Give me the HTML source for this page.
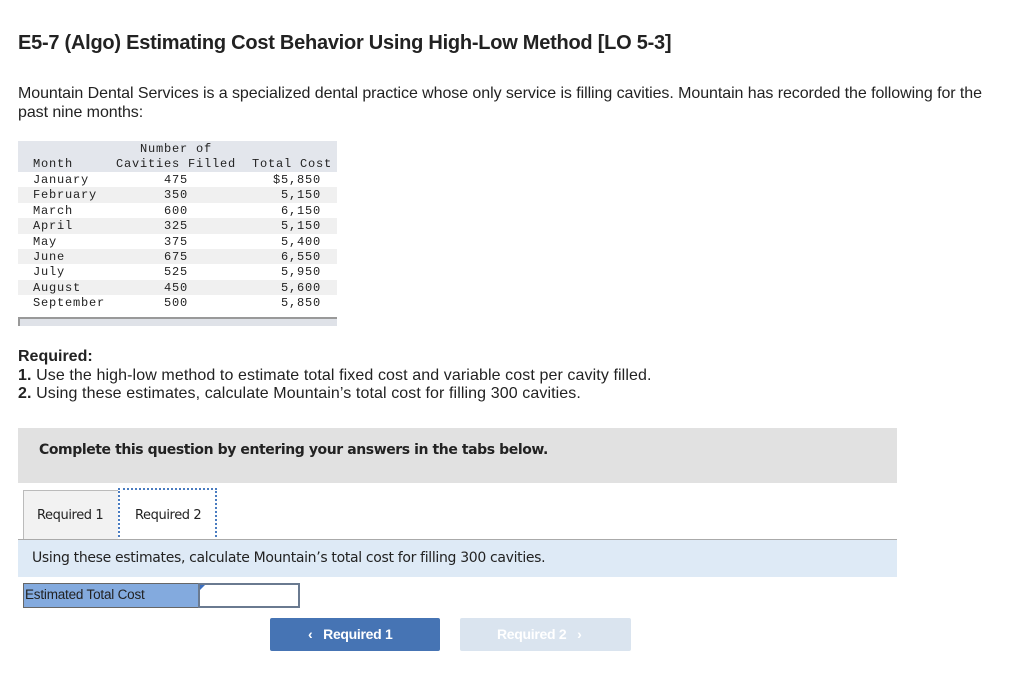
<!DOCTYPE html>
<html><head><style>
*{margin:0;padding:0;box-sizing:border-box}
body{width:1024px;height:684px;background:#fff;font-family:"Liberation Sans",sans-serif;color:#222;position:relative;overflow:hidden}
.a{position:absolute;white-space:nowrap}
.m{font-family:"Liberation Mono",monospace;font-size:12px;letter-spacing:0.8px;color:#222}
.row{position:absolute;left:18px;width:319px;height:15.4px}
.row span{position:absolute;top:1px}
.r{text-align:right;right:16px}
</style></head><body>
<div class="a" style="left:18px;top:32px;font-size:20px;font-weight:bold;letter-spacing:-0.25px">E5-7 (Algo) Estimating Cost Behavior Using High-Low Method [LO 5-3]</div>
<div class="a" style="left:18px;top:84px;font-size:16px;line-height:19px;white-space:normal;width:990px;letter-spacing:-0.07px">Mountain Dental Services is a specialized dental practice whose only service is filling cavities. Mountain has recorded the following for the past nine months:</div>

<div class="a" style="left:18px;top:141px;width:319px;height:31px;background:#e3e6ec"></div>
<div class="a m" style="left:140px;top:142px">Number of</div>
<div class="a m" style="left:33px;top:157px">Month</div>
<div class="a m" style="left:116px;top:157px">Cavities Filled</div>
<div class="a m" style="left:252px;top:157px">Total Cost</div>

<div class="m">
<div class="row" style="top:172px;background:#fff"><span style="left:15px">January</span><span style="left:146px">475</span><span class="r">$5,850</span></div>
<div class="row" style="top:187.4px;background:#f0f0f0"><span style="left:15px">February</span><span style="left:146px">350</span><span class="r">5,150</span></div>
<div class="row" style="top:202.8px;background:#fff"><span style="left:15px">March</span><span style="left:146px">600</span><span class="r">6,150</span></div>
<div class="row" style="top:218.2px;background:#f0f0f0"><span style="left:15px">April</span><span style="left:146px">325</span><span class="r">5,150</span></div>
<div class="row" style="top:233.6px;background:#fff"><span style="left:15px">May</span><span style="left:146px">375</span><span class="r">5,400</span></div>
<div class="row" style="top:249px;background:#f0f0f0"><span style="left:15px">June</span><span style="left:146px">675</span><span class="r">6,550</span></div>
<div class="row" style="top:264.4px;background:#fff"><span style="left:15px">July</span><span style="left:146px">525</span><span class="r">5,950</span></div>
<div class="row" style="top:279.8px;background:#f0f0f0"><span style="left:15px">August</span><span style="left:146px">450</span><span class="r">5,600</span></div>
<div class="row" style="top:295.2px;background:#fff"><span style="left:15px">September</span><span style="left:146px">500</span><span class="r">5,850</span></div>
</div>
<div class="a" style="left:18px;top:317px;width:319px;height:9px;background:#dfe2e8;border-top:2px solid #999;border-left:2px solid #999"></div>

<div class="a" style="left:18px;top:348px;font-size:16px;font-weight:bold">Required:</div>
<div class="a" style="left:18px;top:367px;font-size:16px;letter-spacing:0.1px"><b>1.</b> Use the high-low method to estimate total fixed cost and variable cost per cavity filled.</div>
<div class="a" style="left:18px;top:385px;font-size:16px;letter-spacing:0.1px"><b>2.</b> Using these estimates, calculate Mountain’s total cost for filling 300 cavities.</div>

<div class="a" style="left:18px;top:428px;width:879px;height:55px;background:#e1e1e1"></div>
<div class="a" style="left:39px;top:442px;font-size:14px;font-weight:bold;font-family:'DejaVu Sans',sans-serif;letter-spacing:-0.42px">Complete this question by entering your answers in the tabs below.</div>

<div class="a" style="left:23px;top:490px;width:96px;height:50px;background:#f2f2f2;border:1px solid #bbb;border-bottom:none"></div>
<div class="a" style="left:37px;top:508px;font-size:13px;font-family:'DejaVu Sans',sans-serif;letter-spacing:-0.4px">Required 1</div>
<div class="a" style="left:118px;top:488px;width:99px;height:53px;background:#fff;border:2px dotted #4a7cc0"></div>
<div class="a" style="left:135px;top:508px;font-size:13px;font-family:'DejaVu Sans',sans-serif;letter-spacing:-0.4px">Required 2</div>
<div class="a" style="left:18px;top:539px;width:879px;height:38px;background:#deeaf6;border-top:1px solid #aaa"></div>
<div class="a" style="left:32px;top:550px;font-size:14px;font-family:'DejaVu Sans',sans-serif;letter-spacing:-0.33px">Using these estimates, calculate Mountain’s total cost for filling 300 cavities.</div>

<div class="a" style="left:23px;top:583px;width:176px;height:25px;background:#83aade;border:1px solid #666"></div>
<div class="a" style="left:25px;top:587px;font-size:13.5px;letter-spacing:-0.2px">Estimated Total Cost</div>
<div class="a" style="left:198px;top:583px;width:102px;height:25px;background:#fff;border:2px solid #6a7a90"></div>
<div class="a" style="left:200px;top:585px;width:0;height:0;border-top:5px solid #3b6fc0;border-right:5px solid transparent"></div>

<div class="a" style="left:270px;top:618px;width:170px;height:33px;background:#4674b4;border-radius:2px"></div>
<div class="a" style="left:308px;top:626px;font-size:14px;color:#fff;font-weight:bold;letter-spacing:-0.3px">‹ &nbsp;&nbsp;Required 1</div>
<div class="a" style="left:460px;top:618px;width:171px;height:33px;background:#dae4ef;border-radius:2px"></div>
<div class="a" style="left:497px;top:626px;font-size:14px;color:#fff;font-weight:bold;letter-spacing:-0.3px">Required 2 &nbsp;&nbsp;›</div>
</body></html>
